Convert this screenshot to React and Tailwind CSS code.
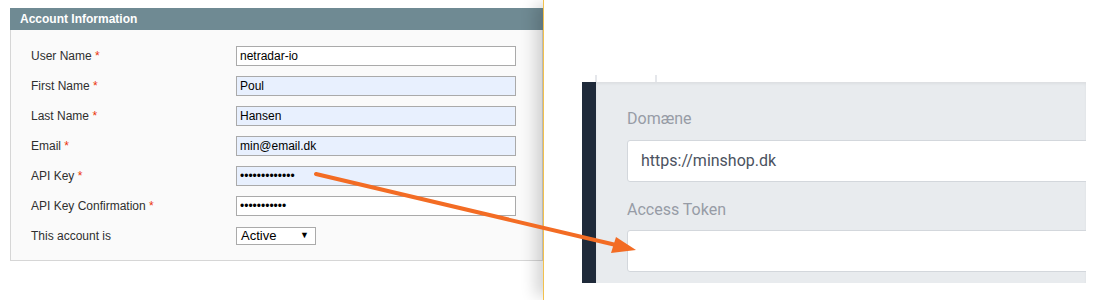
import React from 'react';

const fields = [
  { label: 'User Name', value: 'netradar-io', filled: false },
  { label: 'First Name', value: 'Poul', filled: true },
  { label: 'Last Name', value: 'Hansen', filled: true },
  { label: 'Email', value: 'min@email.dk', filled: true },
  { label: 'API Key', value: 'abcdefghijklm', filled: true, password: true },
  { label: 'API Key Confirmation', value: 'abcdefghijk', filled: false, password: true },
];

function AccountPanel() {
  return (
    <div className="w-[543px] shrink-0 pl-[10px] pt-[8px] font-['Liberation_Sans',Arial,sans-serif] text-[12px]">
      <div className="h-[22px] bg-[#6f8a93] pl-[10px] flex items-center font-bold text-white">
        Account Information
      </div>
      <div className="h-[231px] bg-[#fafafa] border border-t-0 border-[#d6d6d6] pl-[20px] pt-[16px]">
        {fields.map((f) => (
          <div key={f.label} className="flex items-center h-[20px] mb-[10px]">
            <label className="w-[205px] text-[#2f2f2f]">
              {f.label} <span className="text-[#eb340a]">*</span>
            </label>
            <input
              readOnly
              type={f.password ? 'password' : 'text'}
              defaultValue={f.value}
              className={`w-[280px] h-[20px] border border-[#aaaaaa] px-[3px] text-[12px] text-black outline-none font-['Liberation_Sans',Arial,sans-serif] ${
                f.filled ? 'bg-[#e8f0fe]' : 'bg-white'
              }`}
            />
          </div>
        ))}
        <div className="flex items-center h-[20px]">
          <label className="w-[205px] text-[#2f2f2f]">This account is</label>
          <div className="w-[80px] h-[18px] border border-[#aaaaaa] bg-white flex items-center justify-between pl-[4px] pr-[6px] text-[13px] text-black">
            <span>Active</span>
            <span className="text-[9px]">▼</span>
          </div>
        </div>
      </div>
    </div>
  );
}

function TokenPanel() {
  return (
    <div className="relative z-10 flex-1 bg-white border-l border-[#f2c14e] shadow-[-12px_0_14px_-4px_rgba(0,0,0,0.16)] pl-[38px] pt-[75px] font-['Roboto',sans-serif]">
      <div className="flex h-[7px]">
        <div className="w-[2px] ml-[13px] bg-[#e5e7eb]" />
        <div className="w-[2px] ml-[58px] bg-[#e5e7eb]" />
      </div>
      <div className="flex w-[504px] h-[201px]">
        <div className="w-[14px] bg-[#1f2a3a]" />
        <div className="flex-1 overflow-hidden bg-[#e8ebee] shadow-[inset_0_2px_3px_rgba(0,0,0,0.05)] pl-[31px] pt-[27px]">
          <div className="text-[16px] leading-[19px] text-[#979ca6]">Domæne</div>
          <div className="mt-[12px] w-[600px] h-[42px] bg-white border border-[#d3d7dc] rounded-[3px] pl-[13px] flex items-center text-[16px] text-[#4b5260]">
            https://minshop.dk
          </div>
          <div className="mt-[18px] text-[16px] leading-[19px] text-[#979ca6]">Access Token</div>
          <div className="mt-[11px] w-[600px] h-[42px] bg-white border border-[#d3d7dc] rounded-[3px]" />
        </div>
      </div>
    </div>
  );
}

export default function App() {
  return (
    <div className="relative w-[1114px] h-[300px] bg-white overflow-hidden flex">
      <AccountPanel />
      <TokenPanel />
      <svg
        className="absolute inset-0 z-20 pointer-events-none"
        width="1114"
        height="300"
        viewBox="0 0 1114 300"
      >
        <line x1="316" y1="174" x2="616" y2="245" stroke="#f36c24" strokeWidth="4" strokeLinecap="round" />
        <polygon points="611,253 616,237 636,250" fill="#f36c24" />
      </svg>
    </div>
  );
}
